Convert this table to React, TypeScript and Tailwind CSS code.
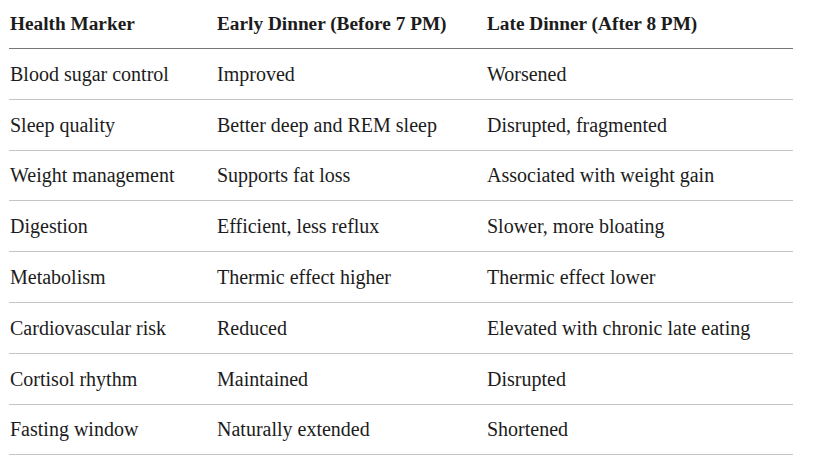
const rows: [string, string, string][] = [
  ['Blood sugar control', 'Improved', 'Worsened'],
  ['Sleep quality', 'Better deep and REM sleep', 'Disrupted, fragmented'],
  ['Weight management', 'Supports fat loss', 'Associated with weight gain'],
  ['Digestion', 'Efficient, less reflux', 'Slower, more bloating'],
  ['Metabolism', 'Thermic effect higher', 'Thermic effect lower'],
  ['Cardiovascular risk', 'Reduced', 'Elevated with chronic late eating'],
  ['Cortisol rhythm', 'Maintained', 'Disrupted'],
  ['Fasting window', 'Naturally extended', 'Shortened'],
];

export default function App() {
  return (
    <div className="w-[814px] h-[470px] bg-white px-[9px] pr-[21px] font-['Liberation_Serif',serif] text-[20px] text-[#1c1c1c]">
      <div className="grid grid-cols-[208px_270px_1fr] h-[49px] items-center border-b border-[#777777] font-bold text-[19.3px]">
        <div className="pl-[1px]">Health Marker</div>
        <div>Early Dinner (Before 7 PM)</div>
        <div>Late Dinner (After 8 PM)</div>
      </div>
      {rows.map((r, i) => (
        <div
          key={i}
          className="grid grid-cols-[208px_270px_1fr] h-[50.8px] items-center border-b border-[#c4c4c4]"
        >
          <div className="pl-[1px]">{r[0]}</div>
          <div>{r[1]}</div>
          <div>{r[2]}</div>
        </div>
      ))}
    </div>
  );
}
